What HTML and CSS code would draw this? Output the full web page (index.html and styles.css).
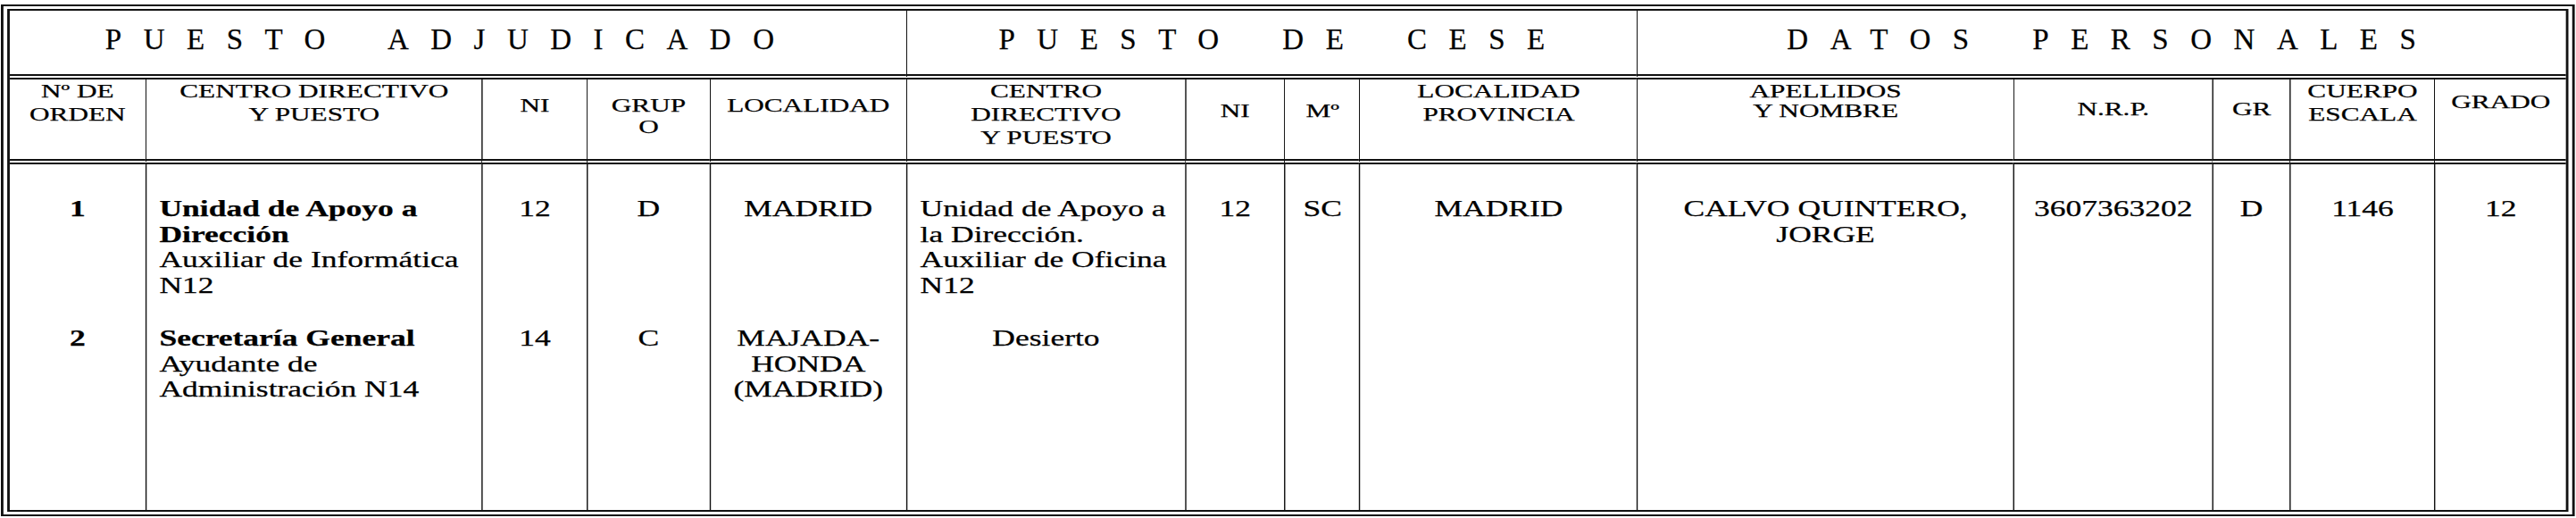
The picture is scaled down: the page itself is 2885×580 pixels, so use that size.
FILE: index.html
```html
<!DOCTYPE html>
<html lang="es">
<head>
<meta charset="utf-8">
<title>Puesto adjudicado</title>
<link rel="stylesheet" href="styles.css">
</head>
<body>
<div class="page">
  <div class="sheet">
    <div class="grid">
      <div class="title span-adj"><span class="title-text">PUESTO ADJUDICADO</span></div>
      <div class="title span-cese"><span class="title-text">PUESTO DE CESE</span></div>
      <div class="title span-datos"><span class="title-text">DATOS PERSONALES</span></div>

      <div class="head first">Nº DE<br>ORDEN</div>
      <div class="head">CENTRO DIRECTIVO<br>Y PUESTO</div>
      <div class="head p16">NI</div>
      <div class="head p16 tight">GRUP<br>O</div>
      <div class="head p16">LOCALIDAD</div>
      <div class="head">CENTRO<br>DIRECTIVO<br>Y PUESTO</div>
      <div class="head p22">NI</div>
      <div class="head p22">Mº</div>
      <div class="head">LOCALIDAD<br>PROVINCIA</div>
      <div class="head names">APELLIDOS<br>Y NOMBRE</div>
      <div class="head p20">N.R.P.</div>
      <div class="head p20">GR</div>
      <div class="head">CUERPO<br>ESCALA</div>
      <div class="head p12">GRADO</div>

      <div class="cell r1 first"><b>1</b></div>
      <div class="cell r1 left"><b>Unidad de Apoyo a<br>Dirección</b><br>Auxiliar de Informática<br>N12</div>
      <div class="cell r1">12</div>
      <div class="cell r1">D</div>
      <div class="cell r1">MADRID</div>
      <div class="cell r1 left">Unidad de Apoyo a<br>la Dirección.<br>Auxiliar de Oficina<br>N12</div>
      <div class="cell r1">12</div>
      <div class="cell r1">SC</div>
      <div class="cell r1">MADRID</div>
      <div class="cell r1">CALVO QUINTERO,<br>JORGE</div>
      <div class="cell r1">3607363202</div>
      <div class="cell r1">D</div>
      <div class="cell r1">1146</div>
      <div class="cell r1">12</div>

      <div class="cell r2 first"><b>2</b></div>
      <div class="cell r2 left"><b>Secretaría General</b><br>Ayudante de<br>Administración N14</div>
      <div class="cell r2">14</div>
      <div class="cell r2">C</div>
      <div class="cell r2">MAJADA-<br>HONDA<br>(MADRID)</div>
      <div class="cell r2">Desierto</div>
      <div class="cell r2"></div>
      <div class="cell r2"></div>
      <div class="cell r2"></div>
      <div class="cell r2"></div>
      <div class="cell r2"></div>
      <div class="cell r2"></div>
      <div class="cell r2"></div>
      <div class="cell r2"></div>
    </div>
  </div>
</div>
</body>
</html>
```

FILE: styles.css
```css
html, body {
  margin: 0;
  padding: 0;
  background: #ffffff;
}

body {
  width: 2885px;
  height: 580px;
  overflow: hidden;
  color: #000000;
  font-family: "Liberation Serif", "Times New Roman", serif;
  -webkit-text-stroke: 0.25px #000000;
}

.page {
  padding: 5px 0 0 1px;
}

/* The scanned form is stretched horizontally; reproduce it with one scale on the sheet */
.sheet {
  width: calc(2883px / 1.42);
  box-sizing: border-box;
  border: 2px solid #111111;
  padding: 3px;
  transform: scaleX(1.42);
  transform-origin: 0 0;
}

.grid {
  display: grid;
  grid-template-columns:
    minmax(0, 152fr) minmax(0, 377fr) minmax(0, 118fr) minmax(0, 137fr)
    minmax(0, 221fr) minmax(0, 312fr) minmax(0, 112fr) minmax(0, 84fr)
    minmax(0, 311fr) minmax(0, 422fr) minmax(0, 223fr) minmax(0, 87fr)
    minmax(0, 162fr) minmax(0, 148fr);
  grid-template-rows: 77px 95px auto 1fr;
  height: 559px;
  border: 2px solid #111111;
}

/* Section titles: spaced capitals, not stretched in the scan */
.title {
  display: flex;
  align-items: center;
  justify-content: center;
  box-sizing: border-box;
  padding-bottom: 6px;
  border-bottom: 6px double #111111;
  white-space: nowrap;
  overflow: visible;
}

.title + .title {
  border-left: 1.4px solid #111111;
}

.title-text {
  display: inline-block;
  flex: none;
  padding-left: 24.5px;
  font-size: 33px;
  line-height: 1;
  letter-spacing: 24.5px;
  word-spacing: 14px;
  transform: scaleX(0.7042);
}

.span-adj { grid-column: 1 / 6; padding-right: 28px; }
.span-cese { grid-column: 6 / 10; }
.span-datos { grid-column: 10 / 15; }

/* Column headings */
.head {
  border-left: 1.4px solid #111111;
  border-bottom: 6px double #111111;
  font-size: 22px;
  line-height: 26px;
  text-align: center;
  white-space: nowrap;
  padding-top: 0;
}

.head.p12 { padding-top: 12px; }
.head.p16 { padding-top: 16px; }
.head.p20 { padding-top: 20px; }
.head.p22 { padding-top: 22px; }
.head.tight { line-height: 24px; padding-top: 17px; }
.head.names { line-height: 22px; padding-top: 2px; }

/* Data */
.cell {
  border-left: 1.4px solid #111111;
  font-size: 25px;
  line-height: 28.5px;
  text-align: center;
  white-space: nowrap;
}

.cell.left {
  text-align: left;
  padding-left: 10px;
}

.cell.r1 { padding-top: 36px; }
.cell.r2 { padding-top: 31px; }

.first {
  border-left: none;
}

b {
  font-weight: bold;
}
```
